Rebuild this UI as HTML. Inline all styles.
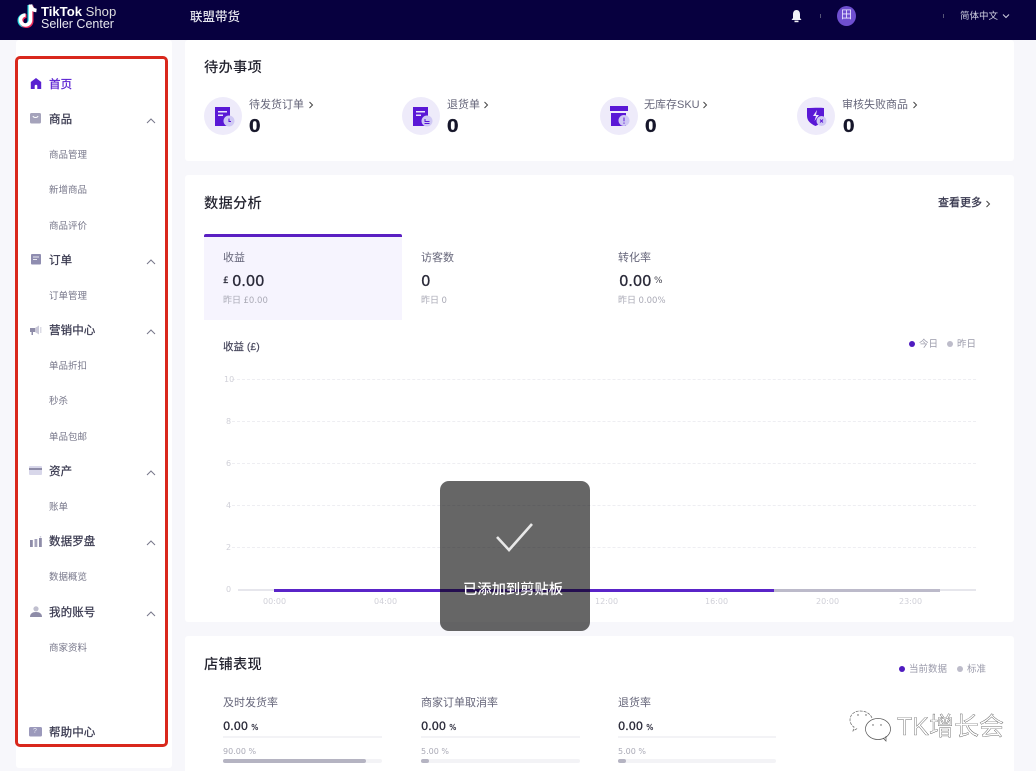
<!DOCTYPE html>
<html lang="zh"><head><meta charset="utf-8"><title>TikTok Shop Seller Center</title>
<style>
html,body{margin:0;padding:0;height:771px;overflow:hidden}
body{width:1036px;position:relative;background:#f7f7fb;font-family:"Liberation Sans","Noto Sans CJK SC",sans-serif;color:#2a2a3a}
.a,.t{position:absolute}
.t{white-space:nowrap;line-height:1;margin-top:1px}
.c{background:#fff;position:absolute;border-radius:3px}
.m{font-size:11.5px;color:#3a3a50;left:49px;font-weight:400;letter-spacing:.1px;-webkit-text-stroke:.25px #3a3a50;margin-top:2px}
.s{font-size:9.5px;color:#77778a;left:49px}
.h{font-size:14.2px;font-weight:500;color:#23232f;left:204px;letter-spacing:.3px;margin-top:1px}
.n{font-family:"DejaVu Sans",sans-serif}
.b{font-family:"Liberation Sans",sans-serif;font-size:18px;font-weight:700;color:#16162a;top:116px;-webkit-text-stroke:.3px #16162a;transform:scaleX(1.15);transform-origin:left}
.v{font-family:"DejaVu Sans",sans-serif;-webkit-text-stroke:.25px #22222f}
.l{font-size:11px;color:#66667a}
.g{color:#d0d0d8;font-family:"DejaVu Sans",sans-serif;font-size:8px}
.d{position:absolute;left:232px;width:744px;border-top:1px dashed #eeeef2;height:0}
.y{font-size:8px;color:#d0d0d8;font-family:"DejaVu Sans",sans-serif;left:224px}
.ic{position:absolute;width:38px;height:38px;top:97px;border-radius:50%;background:#eeebfa}
svg{position:absolute;overflow:visible}
</style></head><body>

<!-- header -->
<div class="a" style="left:0;top:0;width:1036px;height:40px;background:#07003f"></div>
<svg style="left:15px;top:2px" width="26" height="27" viewBox="0 0 26 27">
<path d="M15.5 2.500v15.500a5 5 0 1 1-5-5" fill="none" stroke="#25d8e0" stroke-width="4" transform="translate(-1 .5)"/>
<path d="M15.500 2.500v15.500a5 5 0 1 1-5-5" fill="none" stroke="#f02c5c" stroke-width="4" transform="translate(1 1)"/>
<path d="M15.500 2.500v15.500a5 5 0 1 1-5-5M15.500 2.500c.4 3.600 2.600 5.600 6 6" fill="none" stroke="#fff" stroke-width="3.600"/>
</svg>
<div class="t" style="left:41px;top:4px;font-size:13.100px;color:#fff;font-weight:700">TikTok <span style="font-weight:400;color:#ddd">Shop</span></div>
<div class="t" style="left:41px;top:17px;font-size:12.500px;color:#e6e6ee">Seller Center</div>
<div class="t" style="left:190px;top:10px;font-size:12.500px;color:#e4e4ee;font-weight:500">联盟带货</div>
<svg style="left:790px;top:9px" width="13" height="14" viewBox="0 0 13 14"><path d="M6.500 1C4 1 3 3 3 5.500V9L1.500 11h10L10 9V5.500C10 3 9 1 6.500 1z" fill="#f2f2f6"/><rect x="4.500" y="11.600" width="4" height="1.600" fill="#f2f2f6"/></svg>
<div class="a" style="left:820px;top:14px;width:1px;height:4px;background:#555577"></div>
<div class="a" style="left:837px;top:6px;width:19px;height:20px;border-radius:50%;background:#6e4fd0"></div>
<div class="t" style="left:841px;top:9px;font-size:11px;color:#e8e4ff">田</div>
<div class="a" style="left:943px;top:14px;width:1px;height:4px;background:#555577"></div>
<div class="t" style="left:960px;top:11px;font-size:9.500px;color:#cfcfe0">简体中文</div>
<svg style="left:1002px;top:13px" width="8" height="6" viewBox="0 0 8 6"><path d="M1 1.500l3 3 3-3" fill="none" stroke="#cfcfe0" stroke-width="1"/></svg>

<!-- sidebar -->
<div class="c" style="left:16px;top:40px;width:156px;height:728px"></div>
<div class="a" style="left:15px;top:56px;width:147px;height:685px;border:3px solid #d9281c;border-radius:5px"></div>

<svg style="left:30px;top:78px" width="12" height="11" viewBox="0 0 12 11"><path d="M6 0L.8 4v7h3.900V8a1.300 1.300 0 0 1 2.600 0v3h3.900V4z" fill="#5a21d1"/></svg>
<div class="t m" style="top:78px;color:#5a21d1;-webkit-text-stroke-color:#5a21d1">首页</div>

<svg style="left:30px;top:113px" width="11" height="11" viewBox="0 0 11 11"><rect width="11" height="10.500" rx="1.500" fill="#a5a3bb"/><path d="M3 3c.5 2 4.500 2 5 0" fill="none" stroke="#fff" stroke-width="1"/></svg>
<div class="t m" style="top:113px">商品</div>
<div class="t s" style="top:150px">商品管理</div>
<div class="t s" style="top:185px">新增商品</div>
<div class="t s" style="top:221px">商品评价</div>

<svg style="left:31px;top:254px" width="10" height="11" viewBox="0 0 10 11"><rect width="10" height="10.500" rx="1" fill="#8f8db0"/><path d="M2 3h6M2 5.500h4" stroke="#e9e9f2" stroke-width="1"/></svg>
<div class="t m" style="top:254px">订单</div>
<div class="t s" style="top:291px">订单管理</div>

<svg style="left:30px;top:325px" width="12" height="10" viewBox="0 0 12 10"><path d="M0 3h5v4H3v3H1.500V7H0z" fill="#8e8ca8"/><path d="M5 3l4-2.500v9L5 7z" fill="#c9c8d8"/><rect x="10" y="2" width="1.500" height="6" fill="#dcdce6"/></svg>
<div class="t m" style="top:324px">营销中心</div>
<div class="t s" style="top:361px">单品折扣</div>
<div class="t s" style="top:396px">秒杀</div>
<div class="t s" style="top:432px">单品包邮</div>

<svg style="left:29px;top:466px" width="13" height="9" viewBox="0 0 13 9"><rect width="13" height="9" rx="1" fill="#d8d7ea"/><rect y="2" width="13" height="2" fill="#8e8ca8"/></svg>
<div class="t m" style="top:465px">资产</div>
<div class="t s" style="top:502px">账单</div>

<svg style="left:30px;top:536px" width="12" height="11" viewBox="0 0 12 11"><rect y="4" width="2.800" height="7" fill="#8e8ca8"/><rect x="4.500" y="3" width="2.800" height="8" fill="#a5a3bb"/><rect x="9" y="2" width="2.800" height="9" fill="#8e8ca8"/><circle cx="10.500" cy=".8" r=".8" fill="#c9c8d8"/></svg>
<div class="t m" style="top:535px">数据罗盘</div>
<div class="t s" style="top:572px">数据概览</div>

<svg style="left:30px;top:606px" width="12" height="11" viewBox="0 0 12 11"><circle cx="6" cy="2.800" r="2.600" fill="#c0bfcf"/><path d="M0 11c0-3.500 2.500-5 6-5s6 1.500 6 5z" fill="#8e8ca8"/></svg>
<div class="t m" style="top:606px">我的账号</div>
<div class="t s" style="top:643px">商家资料</div>

<svg style="left:29px;top:727px" width="13" height="10" viewBox="0 0 13 10"><rect width="13" height="9.500" rx="1.500" fill="#9b99bb"/></svg>
<div class="t" style="left:33px;top:727px;font-size:7px;color:#e8e8f2">?</div>
<div class="t m" style="top:726px">帮助中心</div>

<svg style="left:146px;top:118px" width="10" height="6" viewBox="0 0 10 6"><path d="M1 5l4-4 4 4" fill="none" stroke="#77778a" stroke-width="1"/></svg>
<svg style="left:146px;top:259px" width="10" height="6" viewBox="0 0 10 6"><path d="M1 5l4-4 4 4" fill="none" stroke="#77778a" stroke-width="1"/></svg>
<svg style="left:146px;top:329px" width="10" height="6" viewBox="0 0 10 6"><path d="M1 5l4-4 4 4" fill="none" stroke="#77778a" stroke-width="1"/></svg>
<svg style="left:146px;top:470px" width="10" height="6" viewBox="0 0 10 6"><path d="M1 5l4-4 4 4" fill="none" stroke="#77778a" stroke-width="1"/></svg>
<svg style="left:146px;top:540px" width="10" height="6" viewBox="0 0 10 6"><path d="M1 5l4-4 4 4" fill="none" stroke="#77778a" stroke-width="1"/></svg>
<svg style="left:146px;top:611px" width="10" height="6" viewBox="0 0 10 6"><path d="M1 5l4-4 4 4" fill="none" stroke="#77778a" stroke-width="1"/></svg>

<!-- card 1 -->
<div class="c" style="left:185px;top:40px;width:829px;height:121px"></div>
<div class="t h" style="top:60px">待办事项</div>

<div class="ic" style="left:204px"></div>
<svg style="left:215px;top:107px" width="20" height="20" viewBox="0 0 20 20"><rect width="15" height="19" fill="#5a18d6"/><path d="M3 4h9v1.500H3zM3 7.500h5v1.500H3z" fill="#e8e4fa"/><circle cx="14" cy="14" r="5.500" fill="#cfc8f4"/><path d="M14 11.500v3h2" fill="none" stroke="#5a18d6" stroke-width="1"/></svg>
<div class="t l" style="left:249px;top:99px">待发货订单</div>
<svg style="left:308px;top:101px" width="6" height="8" viewBox="0 0 6 8"><path d="M1.500 1l3 3-3 3" fill="none" stroke="#444" stroke-width="1"/></svg>
<div class="t b" style="left:249px">0</div>

<div class="ic" style="left:402px"></div>
<svg style="left:413px;top:107px" width="20" height="20" viewBox="0 0 20 20"><rect width="15" height="19" fill="#5a18d6"/><path d="M3 4h9v1.500H3zM3 7.500h5v1.500H3z" fill="#e8e4fa"/><circle cx="14" cy="14" r="5.500" fill="#cfc8f4"/><path d="M12 12v2.500h4.500M11.500 16.500h5" fill="none" stroke="#5a18d6" stroke-width="1"/></svg>
<div class="t l" style="left:447px;top:99px">退货单</div>
<svg style="left:483px;top:101px" width="6" height="8" viewBox="0 0 6 8"><path d="M1.500 1l3 3-3 3" fill="none" stroke="#444" stroke-width="1"/></svg>
<div class="t b" style="left:447px">0</div>

<div class="ic" style="left:600px"></div>
<svg style="left:610px;top:106px" width="20" height="20" viewBox="0 0 20 20"><rect width="18" height="5" fill="#5a18d6"/><rect x="1" y="7" width="15" height="13" fill="#5a18d6"/><circle cx="14" cy="14.500" r="5.500" fill="#cfc8f4"/><path d="M14 11.500v3.800M14 16.500v1.200" stroke="#5a18d6" stroke-width="1"/></svg>
<div class="t l" style="left:644px;top:99px">无库存SKU</div>
<svg style="left:702px;top:101px" width="6" height="8" viewBox="0 0 6 8"><path d="M1.500 1l3 3-3 3" fill="none" stroke="#444" stroke-width="1"/></svg>
<div class="t b" style="left:645px">0</div>

<div class="ic" style="left:797px"></div>
<svg style="left:807px;top:106px" width="20" height="21" viewBox="0 0 20 21"><path d="M0 2c6 0 11-.5 17 0v8c0 5-4 8-8.500 10C4 18 0 15 0 10z" fill="#5a18d6"/><path d="M10 4L6 10h3l-1.500 5L12 9H9z" fill="#ece8fb"/><circle cx="14.500" cy="15" r="5" fill="#cfc8f4"/><path d="M13 13.500l3 3M16 13.500l-3 3" stroke="#5a18d6" stroke-width="1"/></svg>
<div class="t l" style="left:842px;top:99px">审核失败商品</div>
<svg style="left:912px;top:101px" width="6" height="8" viewBox="0 0 6 8"><path d="M1.500 1l3 3-3 3" fill="none" stroke="#444" stroke-width="1"/></svg>
<div class="t b" style="left:843px">0</div>

<!-- card 2 -->
<div class="c" style="left:185px;top:175px;width:829px;height:447px"></div>
<div class="t h" style="top:196px">数据分析</div>
<div class="t" style="left:938px;top:197px;font-size:11px;color:#33334a;-webkit-text-stroke:.25px #33334a">查看更多</div>
<svg style="left:985px;top:200px" width="6" height="8" viewBox="0 0 6 8"><path d="M1.500 1l3 3-3 3" fill="none" stroke="#444" stroke-width="1"/></svg>

<div class="a" style="left:204px;top:234px;width:198px;height:86px;background:#f6f4fe"></div>
<div class="a" style="left:204px;top:234px;width:198px;height:3px;background:#5a1fc2;border-radius:2px 2px 0 0"></div>

<div class="t l" style="left:223px;top:252px">收益</div>
<div class="t v" style="left:223px;top:276px;font-size:9px">£</div>
<div class="t v" style="left:232px;top:273px;font-size:15px;letter-spacing:-.3px">0.00</div>
<div class="t" style="left:223px;top:295px;font-size:9px;color:#aaaab6">昨日 <span class="n" style="font-size:8.500px">£0.00</span></div>

<div class="t l" style="left:421px;top:252px">访客数</div>
<div class="t v" style="left:421px;top:273px;font-size:15px">0</div>
<div class="t" style="left:421px;top:295px;font-size:9px;color:#aaaab6">昨日 <span class="n" style="font-size:8.500px">0</span></div>

<div class="t l" style="left:618px;top:252px">转化率</div>
<div class="t v" style="left:619px;top:273px;font-size:15px;letter-spacing:-.3px">0.00</div>
<div class="t n" style="left:654px;top:276px;font-size:9px;color:#44444f">%</div>
<div class="t" style="left:618px;top:295px;font-size:9px;color:#aaaab6">昨日 <span class="n" style="font-size:8.500px">0.00%</span></div>

<div class="t" style="left:223px;top:341px;font-size:10.500px;color:#44445a;-webkit-text-stroke:.15px #44445a">收益 (£)</div>
<div class="a" style="left:909px;top:341px;width:6px;height:6px;border-radius:50%;background:#4f1bc0"></div>
<div class="t" style="left:919px;top:339px;font-size:9.500px;color:#9a9aaa">今日</div>
<div class="a" style="left:947px;top:341px;width:6px;height:6px;border-radius:50%;background:#bdbcca"></div>
<div class="t" style="left:957px;top:339px;font-size:9.500px;color:#9a9aaa">昨日</div>

<div class="d" style="top:379px"></div><div class="d" style="top:421px"></div><div class="d" style="top:463px"></div><div class="d" style="top:505px"></div><div class="d" style="top:547px"></div>
<div class="t y" style="top:375px">10</div><div class="t y" style="top:417px;left:226px">8</div><div class="t y" style="top:459px;left:226px">6</div><div class="t y" style="top:501px;left:226px">4</div><div class="t y" style="top:543px;left:226px">2</div><div class="t y" style="top:585px;left:226px">0</div>
<div class="a" style="left:238px;top:589px;width:738px;height:2px;background:#e6e6ec"></div>
<div class="a" style="left:774px;top:589px;width:166px;height:3px;background:#bcbaca"></div>
<div class="a" style="left:274px;top:589px;width:500px;height:3px;background:#5a24c8"></div>
<div class="t g" style="left:263px;top:597px">00:00</div>
<div class="t g" style="left:374px;top:597px">04:00</div>
<div class="t g" style="left:595px;top:597px">12:00</div>
<div class="t g" style="left:705px;top:597px">16:00</div>
<div class="t g" style="left:816px;top:597px">20:00</div>
<div class="t g" style="left:899px;top:597px">23:00</div>

<!-- card 3 -->
<div class="c" style="left:185px;top:636px;width:829px;height:135px;border-radius:3px 3px 0 0"></div>
<div class="t h" style="top:657px">店铺表现</div>
<div class="a" style="left:899px;top:666px;width:6px;height:6px;border-radius:50%;background:#4f1bc0"></div>
<div class="t" style="left:909px;top:664px;font-size:9.500px;color:#9a9aaa">当前数据</div>
<div class="a" style="left:957px;top:666px;width:6px;height:6px;border-radius:50%;background:#bdbcca"></div>
<div class="t" style="left:967px;top:664px;font-size:9.500px;color:#9a9aaa">标准</div>

<div class="t l" style="left:223px;top:697px">及时发货率</div>
<div class="t v" style="left:223px;top:720px;font-size:11.500px;letter-spacing:-.2px">0.00 <span style="font-size:7.500px;color:#55556a">%</span></div>
<div class="a" style="left:223px;top:736px;width:159px;height:2px;background:#f3f3f6"></div>
<div class="t n" style="left:223px;top:747px;font-size:8px;color:#aaaab6">90.00 %</div>
<div class="a" style="left:223px;top:759px;width:159px;height:4px;background:#f3f3f6;border-radius:2px"></div>
<div class="a" style="left:223px;top:759px;width:143px;height:4px;background:#b5b4c2;border-radius:2px"></div>

<div class="t l" style="left:421px;top:697px">商家订单取消率</div>
<div class="t v" style="left:421px;top:720px;font-size:11.500px;letter-spacing:-.2px">0.00 <span style="font-size:7.500px;color:#55556a">%</span></div>
<div class="a" style="left:421px;top:736px;width:159px;height:2px;background:#f3f3f6"></div>
<div class="t n" style="left:421px;top:747px;font-size:8px;color:#aaaab6">5.00 %</div>
<div class="a" style="left:421px;top:759px;width:159px;height:4px;background:#f3f3f6;border-radius:2px"></div>
<div class="a" style="left:421px;top:759px;width:8px;height:4px;background:#b5b4c2;border-radius:2px"></div>

<div class="t l" style="left:618px;top:697px">退货率</div>
<div class="t v" style="left:618px;top:720px;font-size:11.500px;letter-spacing:-.2px">0.00 <span style="font-size:7.500px;color:#55556a">%</span></div>
<div class="a" style="left:618px;top:736px;width:158px;height:2px;background:#f3f3f6"></div>
<div class="t n" style="left:618px;top:747px;font-size:8px;color:#aaaab6">5.00 %</div>
<div class="a" style="left:618px;top:759px;width:158px;height:4px;background:#f3f3f6;border-radius:2px"></div>
<div class="a" style="left:618px;top:759px;width:8px;height:4px;background:#b5b4c2;border-radius:2px"></div>

<!-- watermark -->
<svg style="left:850px;top:710px" width="42" height="32" viewBox="0 0 42 32"><path d="M22 8C20 3 15 1 10 1 4 1 0 5 0 10c0 3 2 6 4 7l-1 4 5-3" fill="none" stroke="#666" stroke-width=".7" stroke-dasharray="3 1"/><ellipse cx="28" cy="19" rx="12.500" ry="10.500" fill="#fff" stroke="#555" stroke-width=".7"/><path d="M33 28l3 3v-5" fill="none" stroke="#555" stroke-width=".7"/><circle cx="8" cy="5" r=".7" fill="#555"/><circle cx="16" cy="5" r=".7" fill="#555"/><circle cx="23" cy="15" r=".7" fill="#555"/><circle cx="31" cy="15" r=".7" fill="#555"/></svg>
<div class="t" style="left:897px;top:714px;font-size:25px;color:#fff;-webkit-text-stroke:.35px #444">TK增长会</div>

<!-- toast -->
<div class="a" style="left:440px;top:481px;width:150px;height:150px;background:rgba(0,0,0,.6);border-radius:9px"></div>
<svg style="left:495px;top:522px" width="40" height="30" viewBox="0 0 40 30"><path d="M2 15l12 13L37 2" fill="none" stroke="#e8e8e8" stroke-width="2.600"/></svg>
<div class="t" style="left:463px;top:582px;font-size:14.300px;color:#fff;font-weight:500">已添加到剪贴板</div>

</body></html>
